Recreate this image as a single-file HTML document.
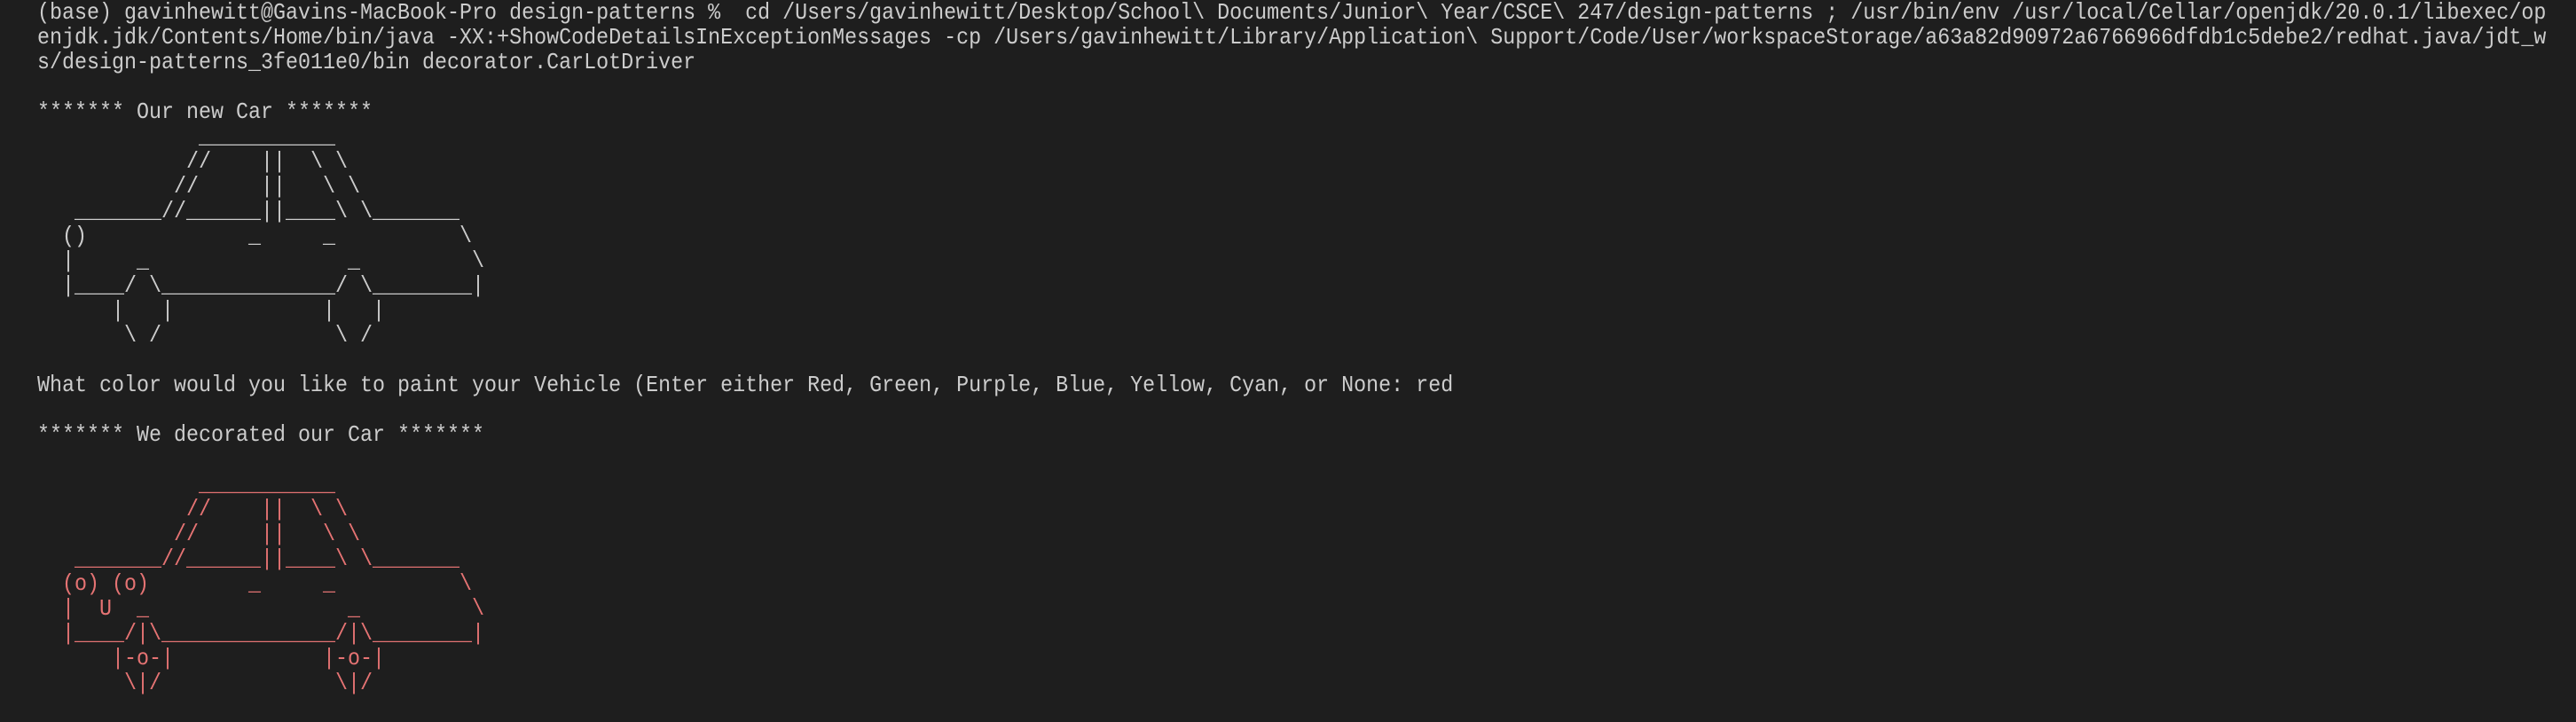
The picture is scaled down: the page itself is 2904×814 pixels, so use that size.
<!DOCTYPE html>
<html><head><meta charset="utf-8"><style>
html,body{margin:0;padding:0;background:#1e1e1e;width:2904px;height:814px;overflow:hidden}
#t{position:absolute;left:42px;top:0;transform:scaleX(0.8974);transform-origin:0 0;font-family:"Liberation Mono","DejaVu Sans Mono",monospace;font-size:26px;line-height:28px;color:#cccccc;white-space:pre}
.r{color:#e57373}
</style></head><body><div id="t">(base) gavinhewitt@Gavins-MacBook-Pro design-patterns %  cd /Users/gavinhewitt/Desktop/School\ Documents/Junior\ Year/CSCE\ 247/design-patterns ; /usr/bin/env /usr/local/Cellar/openjdk/20.0.1/libexec/op
enjdk.jdk/Contents/Home/bin/java -XX:+ShowCodeDetailsInExceptionMessages -cp /Users/gavinhewitt/Library/Application\ Support/Code/User/workspaceStorage/a63a82d90972a6766966dfdb1c5debe2/redhat.java/jdt_w
s/design-patterns_3fe011e0/bin decorator.CarLotDriver

******* Our new Car *******
             ___________
            //    ||  \ \
           //     ||   \ \
   _______//______||____\ \_______
  ()             _     _          \
  |     _                _         \
  |____/ \______________/ \________|
      |   |            |   |
       \ /              \ /

What color would you like to paint your Vehicle (Enter either Red, Green, Purple, Blue, Yellow, Cyan, or None: red

******* We decorated our Car *******

<span class="r">             ___________
            //    ||  \ \
           //     ||   \ \
   _______//______||____\ \_______
  (o) (o)        _     _          \
  |  U  _                _         \
  |____/|\______________/|\________|
      |-o-|            |-o-|
       \|/              \|/</span>
</div></body></html>
